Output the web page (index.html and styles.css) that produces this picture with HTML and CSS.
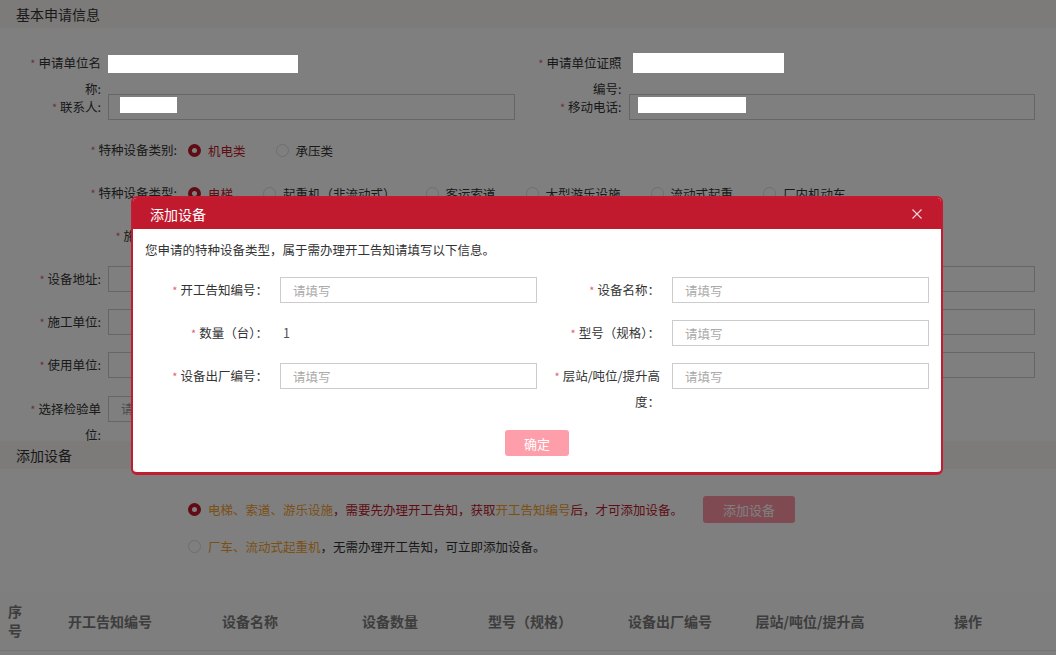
FILE: index.html
```html
<!DOCTYPE html>
<html lang="zh-CN">
<head>
  <meta charset="UTF-8">
  <meta name="viewport" content="width=device-width, initial-scale=1.0">
  <title>添加设备</title>
  <link rel="stylesheet" href="styles.css">
</head>
<body>
  <!-- 基本申请信息 -->
  <div class="sec-title">基本申请信息</div>
  <div class="basic-form">
    <div class="row two gap18">
      <div class="field">
        <label class="lbl"><i>*</i>申请单位名称:</label>
        <div class="val"><span class="mask m1"></span></div>
      </div>
      <div class="field">
        <label class="lbl"><i>*</i>申请单位证照编号:</label>
        <div class="val"><span class="mask m2"></span></div>
      </div>
    </div>
    <div class="row two">
      <div class="field">
        <label class="lbl"><i>*</i>联系人:</label>
        <div class="box"><span class="mask m3"></span></div>
      </div>
      <div class="field">
        <label class="lbl"><i>*</i>移动电话:</label>
        <div class="box"><span class="mask m4"></span></div>
      </div>
    </div>
    <div class="row">
      <label class="lbl wide"><i>*</i>特种设备类别:</label>
      <div class="opts">
        <span class="opt on"><span class="radio on"></span>机电类</span>
        <span class="opt"><span class="radio"></span>承压类</span>
      </div>
    </div>
    <div class="row">
      <label class="lbl wide"><i>*</i>特种设备类型:</label>
      <div class="opts">
        <span class="opt on"><span class="radio on"></span>电梯</span>
        <span class="opt"><span class="radio"></span>起重机（非流动式）</span>
        <span class="opt"><span class="radio"></span>客运索道</span>
        <span class="opt"><span class="radio"></span>大型游乐设施</span>
        <span class="opt"><span class="radio"></span>流动式起重</span>
        <span class="opt"><span class="radio"></span>厂内机动车</span>
      </div>
    </div>
    <div class="row">
      <label class="lbl wide"><i>*</i>施工类型:</label>
      <div class="opts"></div>
    </div>
    <div class="row">
      <label class="lbl"><i>*</i>设备地址:</label>
      <div class="box"></div>
    </div>
    <div class="row">
      <label class="lbl"><i>*</i>施工单位:</label>
      <div class="box"></div>
    </div>
    <div class="row gap18">
      <label class="lbl"><i>*</i>使用单位:</label>
      <div class="box"></div>
    </div>
    <div class="row">
      <label class="lbl"><i>*</i>选择检验单位:</label>
      <div class="box select">请选择检验单位</div>
    </div>
  </div>

  <!-- 添加设备 -->
  <div class="sec-title">添加设备</div>
  <div class="notice">
    <div class="notice-row">
      <span class="radio on"></span>
      <span class="warn">电梯、索道、游乐设施</span><span class="red">，需要先办理开工告知，获取</span><span class="warn">开工告知编号</span><span class="red">后，才可添加设备。</span>
      <button class="btn-add">添加设备</button>
    </div>
    <div class="notice-row">
      <span class="radio"></span>
      <span class="warn">厂车、流动式起重机</span><span>，无需办理开工告知，可立即添加设备。</span>
    </div>
  </div>

  <table class="dev-table">
    <colgroup>
      <col class="c-no"><col class="c-w"><col class="c-w"><col class="c-w"><col class="c-w"><col class="c-w"><col class="c-w"><col>
    </colgroup>
    <thead>
      <tr>
        <th class="no">序号</th>
        <th>开工告知编号</th>
        <th>设备名称</th>
        <th>设备数量</th>
        <th>型号（规格）</th>
        <th>设备出厂编号</th>
        <th class="long"><span class="clip">层站/吨位/提升高度</span></th>
        <th>操作</th>
      </tr>
    </thead>
  </table>

  <!-- 弹窗 -->
  <div class="overlay"></div>
  <div class="dialog">
    <div class="dlg-head">
      <span>添加设备</span>
      <svg class="dlg-close" width="10" height="10" viewBox="0 0 10 10"><path d="M0.5 0.5L9.5 9.5M9.5 0.5L0.5 9.5" stroke="#f4d8dc" stroke-width="1.1" fill="none"/></svg>
    </div>
    <div class="dlg-body">
      <p class="dlg-tip">您申请的特种设备类型，属于需办理开工告知请填写以下信息。</p>
      <div class="dlg-form">
        <div class="item"><label><i>*</i>开工告知编号：</label><input type="text" placeholder="请填写"></div>
        <div class="item"><label><i>*</i>设备名称：</label><input type="text" placeholder="请填写"></div>
        <div class="item"><label><i>*</i>数量（台）：</label><span class="num">1</span></div>
        <div class="item"><label><i>*</i>型号（规格）：</label><input type="text" placeholder="请填写"></div>
        <div class="item"><label><i>*</i>设备出厂编号：</label><input type="text" placeholder="请填写"></div>
        <div class="item"><label><i>*</i>层站/吨位/提升高度：</label><input type="text" placeholder="请填写"></div>
      </div>
      <div class="dlg-foot"><button class="btn-ok">确定</button></div>
    </div>
  </div>
</body>
</html>
```

FILE: styles.css
```css
*{margin: 0; padding: 0; box-sizing: border-box;}
body{
  font-family: "Noto Sans CJK SC", sans-serif;
  font-size: 12.5px;
  color: #333;
  background: #fff;
  overflow: hidden;
}
i{font-style: normal; font-size: 11px; color: #e4606f; margin-right: 3px;}

/* 섹션 제목 */
.sec-title{
  height: 28px; line-height: 28px;
  padding-left: 16px;
  font-size: 14px;
  background: #f9f6f4;
}

/* 기본 신청 정보 */
.basic-form{padding: 22px 21px 19px 16px;}
.row{display: flex; height: 26px; margin-bottom: 17px;}
.row.gap18{margin-bottom: 18px;}
.row:last-child{margin-bottom: 0;}
.row.two{gap: 22px;}
.field{display: flex; flex: 1;}
.lbl{
  flex: none;
  width: 85px; margin-right: 7px;
  line-height: 26px;
  text-align: right;
}
.lbl.wide{width: 161px; margin-right: 11px;}
.val{flex: 1;}
.box{flex: 1; height: 26px; border: 1px solid #ccc; background: #fff;}
.box.select{flex: none; width: 290px; padding-left: 12px; line-height: 24px; color: #999;}

/* 가림 처리 */
.mask{position: relative; z-index: 12; display: block; background: #fff;}
.m1{width: 190px; height: 18px; margin-top: 5px;}
.m2{width: 151px; height: 20px; margin: 3px 0 0 4px;}
.m3{width: 57px; height: 16px; margin: 2px 0 0 11px;}
.m4{width: 108px; height: 16px; margin: 2px 0 0 8px;}

/* 라디오 */
.opts{display: flex; align-items: center;}
.opt{display: flex; align-items: center; margin-right: 30px;}
.opt.on{color: #c0182b;}
.radio{
  flex: none;
  width: 13px; height: 13px;
  border: 1px solid #ddd; border-radius: 50%;
  background: #fff;
  margin-right: 7px;
}
.radio.on{border: 4px solid #c0182b;}

/* 장비 추가 안내 */
.notice{padding: 27px 0 0 188px;}
.notice-row{display: flex; align-items: center; height: 27px;}
.notice-row + .notice-row{margin-top: 10px;}
.warn{color: #f5a030;}
.red{color: #c0182b;}
.btn-add{
  margin-left: 20px;
  width: 92px; height: 27px;
  border: none; border-radius: 3px;
  background: #ff95a5;
  color: #fff;
  font-family: inherit; font-size: 13px;
}

/* 테이블 */
.dev-table{width: 100%; margin-top: 32px; border-collapse: collapse; table-layout: fixed;}
.c-no{width: 40px;}
.c-w{width: 140px;}
.dev-table th{
  padding: 10px 8px;
  font-size: 14px; font-weight: bold;
  line-height: 19px;
  color: #7a7a7a;
  text-align: center; vertical-align: middle;
  background: #fcfcfc;
  border-bottom: 1px solid #e8e8e8;
}
.dev-table th.no{text-align: left;}
.dev-table th.long{padding: 10px 14px;}
.clip{display: block; height: 19px; overflow: hidden;}

/* 모달 */
.overlay{position: fixed; inset: 0; background: rgba(0,0,0,.5); z-index: 10;}
.dialog{
  position: fixed; left: 131px; top: 196px; z-index: 20;
  width: 812px;
  background: #fff;
  border: 2px solid #c41b30; border-bottom-width: 3px;
  border-radius: 6px;
  overflow: hidden;
}
.dlg-head{
  display: flex; align-items: center; justify-content: space-between;
  height: 31px;
  padding: 0 19px 0 17px;
  background: #c11a2e;
  color: #fff; font-size: 14px;
}
.dlg-body{padding: 12px 12px 16px;}
.dlg-tip{line-height: 18px;}
.dlg-form{
  display: grid;
  grid-template-columns: repeat(2, 384px);
  column-gap: 8px; row-gap: 17px;
  align-items: start;
  margin: 18px 0 0 8px;
}
.item{display: flex;}
.item label{flex: none; width: 115px; margin-right: 12px; line-height: 26px; text-align: right;}
.item input{
  width: 257px; height: 26px;
  border: 1px solid #ccc;
  padding: 0 12px;
  font: inherit; color: #333;
  outline: none;
}
.item input::placeholder{color: #aaa;}
.num{line-height: 26px; padding-left: 3px; color: #555;}
.dlg-foot{margin-top: 15px; text-align: center;}
.btn-ok{
  width: 64px; height: 26px;
  border: none; border-radius: 3px;
  background: #fd9eaa;
  color: #fff;
  font-family: inherit; font-size: 13px;
}
```
